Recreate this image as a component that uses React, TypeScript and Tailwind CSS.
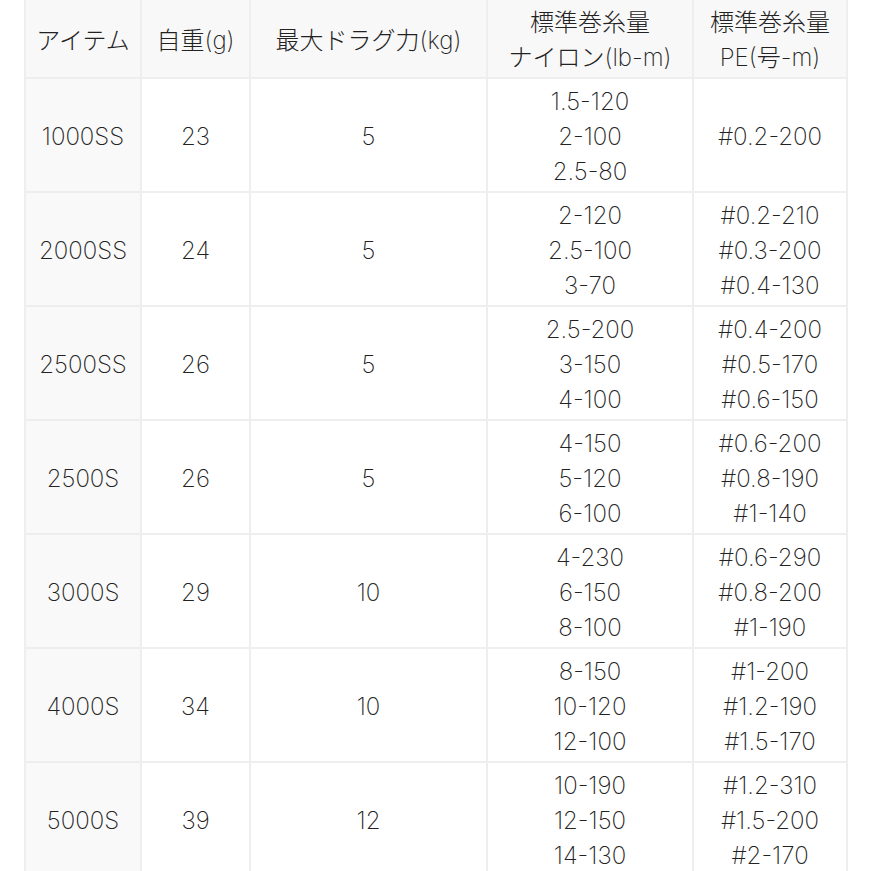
import React from "react";

type Row = {
  item: string;
  weight: string;
  drag: string;
  nylon: string[];
  pe: string[];
};

const rows: Row[] = [
  { item: "1000SS", weight: "23", drag: "5", nylon: ["1.5-120", "2-100", "2.5-80"], pe: ["#0.2-200"] },
  { item: "2000SS", weight: "24", drag: "5", nylon: ["2-120", "2.5-100", "3-70"], pe: ["#0.2-210", "#0.3-200", "#0.4-130"] },
  { item: "2500SS", weight: "26", drag: "5", nylon: ["2.5-200", "3-150", "4-100"], pe: ["#0.4-200", "#0.5-170", "#0.6-150"] },
  { item: "2500S", weight: "26", drag: "5", nylon: ["4-150", "5-120", "6-100"], pe: ["#0.6-200", "#0.8-190", "#1-140"] },
  { item: "3000S", weight: "29", drag: "10", nylon: ["4-230", "6-150", "8-100"], pe: ["#0.6-290", "#0.8-200", "#1-190"] },
  { item: "4000S", weight: "34", drag: "10", nylon: ["8-150", "10-120", "12-100"], pe: ["#1-200", "#1.2-190", "#1.5-170"] },
  { item: "5000S", weight: "39", drag: "12", nylon: ["10-190", "12-150", "14-130"], pe: ["#1.2-310", "#1.5-200", "#2-170"] },
];

const cell = "flex flex-col items-center justify-center text-center pt-[3px] border-r-2 border-[#eeeeee] shrink-0";

function Lines({ items }: { items: string[] }) {
  return (
    <>
      {items.map((t) => (
        <span key={t}>{t}</span>
      ))}
    </>
  );
}

export default function App() {
  return (
    <div
      className="w-[871px] h-[871px] overflow-hidden bg-white text-[#222222] text-[24px] leading-[35px] font-extralight"
      style={{ fontFamily: 'Inter, "Noto Sans CJK JP", sans-serif' }}
    >
      <div className="ml-[24px] w-[824px] border-l-2 border-[#eeeeee]">
        {/* Header */}
        <div className="flex h-[79px] bg-[#f8f8f8] border-b-2 border-[#eeeeee]">
          <div className={`${cell} w-[116px]`}>アイテム</div>
          <div className={`${cell} w-[109px]`}>自重(g)</div>
          <div className={`${cell} w-[237px]`}>最大ドラグ力(kg)</div>
          <div className={`${cell} w-[206px]`}>
            <span>標準巻糸量</span>
            <span>ナイロン(lb-m)</span>
          </div>
          <div className={`${cell} w-[154px]`}>
            <span>標準巻糸量</span>
            <span>PE(号-m)</span>
          </div>
        </div>

        {/* Body */}
        {rows.map((r) => (
          <div key={r.item} className="flex h-[114px] border-b-2 border-[#eeeeee]">
            <div className={`${cell} w-[116px] bg-[#f9f9f9]`}>{r.item}</div>
            <div className={`${cell} w-[109px]`}>{r.weight}</div>
            <div className={`${cell} w-[237px]`}>{r.drag}</div>
            <div className={`${cell} w-[206px]`}>
              <Lines items={r.nylon} />
            </div>
            <div className={`${cell} w-[154px]`}>
              <Lines items={r.pe} />
            </div>
          </div>
        ))}
      </div>
    </div>
  );
}
